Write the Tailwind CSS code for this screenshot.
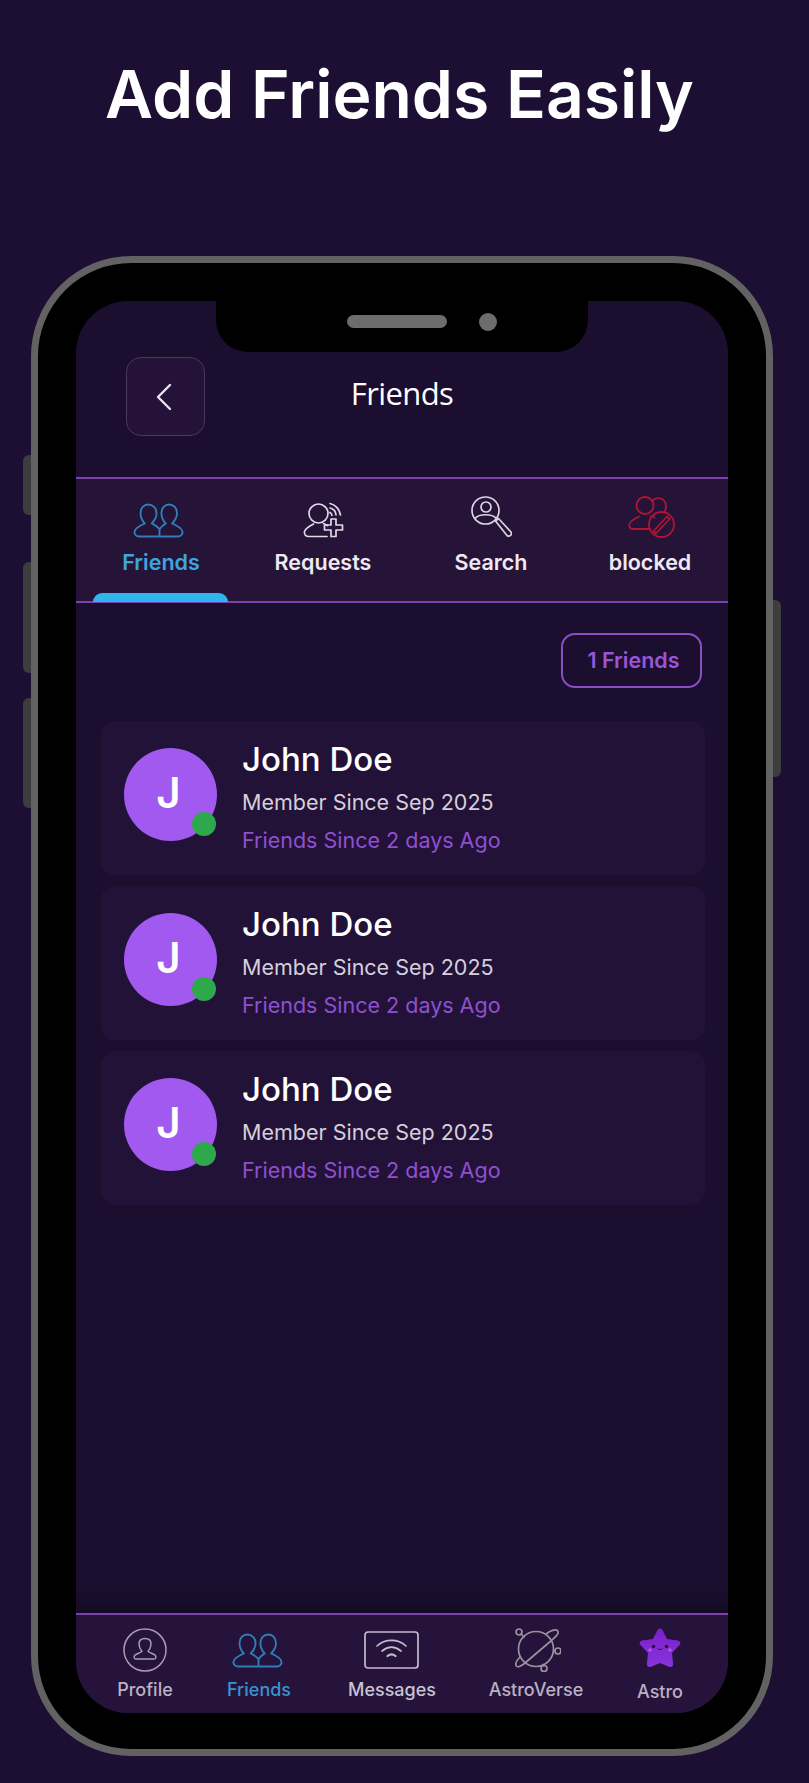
<!DOCTYPE html>
<html lang="en">
<head>
    <meta charset="UTF-8">
    <meta name="viewport" content="width=device-width, initial-scale=1.0">
    <title>Add Friends Easily</title>
    <script src="https://cdn.jsdelivr.net/npm/@tailwindcss/browser@4"></script>
</head>
<body class="bg-[#1d0e33] font-['Inter',sans-serif]">
    <div class="relative w-[809px] h-[1783px] overflow-hidden">
        <!-- Headline -->
        <h1 class="h-[256px] pt-[56px] pr-[10px] text-center text-[66px] leading-[76px] font-semibold text-white">Add Friends Easily</h1>

        <!-- Phone side buttons -->
        <div class="absolute left-[23px] top-[455px] w-[10px] h-[60px] rounded-l-md bg-[#3d3d3d]"></div>
        <div class="absolute left-[23px] top-[562px] w-[10px] h-[111px] rounded-l-md bg-[#3d3d3d]"></div>
        <div class="absolute left-[23px] top-[698px] w-[10px] h-[110px] rounded-l-md bg-[#3d3d3d]"></div>
        <div class="absolute left-[771px] top-[600px] w-[10px] h-[177px] rounded-r-md bg-[#3d3d3d]"></div>

        <!-- Phone -->
        <div class="relative ml-[31px] w-[742px] h-[1500px] box-border border-[7px] border-[#626262] rounded-[100px] bg-black px-[38px] pt-[38px] pb-[36px]">
            <div class="relative h-full flex flex-col overflow-hidden rounded-[52px] bg-[#1b0e2f]">
                <!-- Notch -->
                <div class="absolute left-[140px] top-0 w-[372px] h-[51px] rounded-b-[32px] bg-black flex items-start pt-[12px]">
                    <div class="ml-[131px] mt-[2px] w-[100px] h-[13px] rounded-full bg-[#6d6d6d]"></div>
                    <div class="ml-[32px] w-[18px] h-[18px] rounded-full bg-[#6d6d6d]"></div>
                </div>

                <!-- Header -->
                <header class="h-[176px] shrink-0 grid grid-cols-[1fr_auto_1fr] items-start pt-[56px]">
                    <button class="ml-[50px] w-[79px] h-[79px] rounded-[15px] border border-[#493a5c] bg-[#241238] flex items-center justify-center">
                        <svg class="mr-[4px]" width="18" height="28" viewBox="0 0 18 28" fill="none" stroke="#ece6f0" stroke-width="2.4" stroke-linecap="round" stroke-linejoin="round"><path d="M15 2 L3 14 L15 26"/></svg>
                    </button>
                    <h2 class="mt-[16px] font-['Open_Sans',sans-serif] text-[31px] leading-[40px] tracking-[-0.6px] text-white">Friends</h2>
                    <div></div>
                </header>

                <!-- Tabs -->
                <nav class="relative h-[126px] shrink-0 box-border border-y-2 border-[#7a42b0] bg-[#251338] grid grid-cols-[170px_154px_182px_136px] pt-[17px] text-[21.5px] leading-[24px] font-semibold text-[#efe9f2]">
                    <div class="relative flex flex-col items-center text-[#3ea6dc]">
                        <div class="h-[42px] flex items-end mr-[5px]">
                            <svg width="51" height="35" viewBox="0 0 52 36" fill="none" stroke="#2f7fb8" stroke-width="1.9" stroke-linejoin="round"><path d="M27 34.5 H6 C2 34.5 .8 31 1.5 29 C2.5 25 8 23 12 21 C9 18 7.5 14 7.5 10.5 C7.5 5 11 1.5 15.5 1.5 C20 1.5 24 5 24 10.5 C24 14 22 18 19 21 C22 22.5 25 24 27 27 V34.5"/><path d="M27 34.5 H46 C50 34.5 51.2 31 50.5 29 C49.5 25 44 23 40 21 C43 18 45 14 45 10.5 C45 5 41.5 1.5 37 1.5 C32.5 1.5 29 5 29 10.5 C29 14 30.5 18 33.5 21 C31 22.5 29 24 27 27"/></svg>
                        </div>
                        <span class="mt-[12px]">Friends</span>
                    </div>
                    <div class="flex flex-col items-center">
                        <div class="h-[42px] flex items-end">
                            <svg width="41" height="36" viewBox="0 0 41 36" fill="none" stroke="#e2d9e6" stroke-width="1.7" stroke-linecap="round" stroke-linejoin="round"><circle cx="15.5" cy="11.5" r="9.5"/><path d="M24 34.5 H6 C2.5 34.5 .8 32 1.5 29.5 C3 25.5 7 24 10.5 22 M20.5 21.5 C22 22 23.5 22.8 24.5 23.5"/><path d="M27 1.5 C32 2.5 36.5 7 37.5 13 M27 6 C30 6.5 32.5 9.5 33 13 M27 10.5 C28 11 28.8 12 29 13.5"/><path d="M28 17 H33 V23 H39.5 V28 H33 V34.5 H28 V28 H21.5 V23 H28 Z"/></svg>
                        </div>
                        <span class="mt-[12px]">Requests</span>
                    </div>
                    <div class="flex flex-col items-center">
                        <div class="h-[42px] flex items-end">
                            <svg width="41" height="42" viewBox="0 0 41 42" fill="none" stroke="#dcd3e0" stroke-width="1.7" stroke-linecap="round" stroke-linejoin="round"><circle cx="14.5" cy="14.5" r="13.5"/><circle cx="15" cy="11" r="5"/><path d="M4 22.5 C8 17.5 21 17.5 25.5 22.5"/><path d="M24.5 25 L27.5 22.5 L40 36 C41.5 38.5 38.5 41.5 36 39.5 Z"/></svg>
                        </div>
                        <span class="mt-[12px]">Search</span>
                    </div>
                    <div class="flex flex-col items-center">
                        <div class="h-[42px] flex items-end ml-[3px]">
                            <svg width="47" height="42" viewBox="0 0 47 42" fill="none" stroke="#b01535" stroke-width="1.8" stroke-linecap="round" stroke-linejoin="round"><circle cx="17" cy="9.5" r="8.5"/><path d="M25 4.5 C27 1.5 33 1 36 4.5 C39 8 38.5 13 36 16.5"/><path d="M22 33 H5 C1.5 33 .8 30 1.5 28 C3 24 8 22 11 20.5 M23 20 C24.5 20.5 25.5 21 26.5 21.5"/><circle cx="33.5" cy="28.5" r="12.5"/><path d="M25.5 35 L39 20.5 L41.5 23 L28 37.5 Z"/></svg>
                        </div>
                        <span class="mt-[12px]">blocked</span>
                    </div>
                    <div class="absolute left-[17px] bottom-[-1px] w-[135px] h-[9px] rounded-t-[10px] bg-[#2fb6ee]"></div>
                </nav>

                <!-- Friend list -->
                <section class="shrink-0 pl-[25px] pr-[23px]">
                    <div class="flex justify-end pt-[30px] pr-[3px]">
                        <span class="w-[141px] h-[55px] box-border rounded-[14px] border-2 border-[#8a4fc4] pl-[4px] flex items-center justify-center text-[21.5px] font-semibold text-[#9a55d8]">1 Friends</span>
                    </div>
                    <div class="mt-[33px] flex flex-col gap-[11px]">
                        <article class="h-[154px] rounded-[14px] bg-[#221238] flex items-start pl-[23px]">
                            <div class="relative mt-[27px] w-[93px] h-[93px] shrink-0 rounded-full bg-[#a259f0] flex items-center justify-center pr-[4px] pb-[4px] text-[42px] font-semibold text-white">J
                                <span class="absolute left-[68px] top-[64px] w-[24px] h-[24px] rounded-full bg-[#2ea84a]"></span>
                            </div>
                            <div class="ml-[25px] pt-[18px] flex flex-col">
                                <span class="text-[33px] leading-[40px] font-medium text-white">John Doe</span>
                                <span class="mt-[8px] text-[21.5px] leading-[30px] text-[#d5cfdc]">Member Since Sep 2025</span>
                                <span class="mt-[8px] text-[21.5px] leading-[30px] text-[#8f50d0]">Friends Since 2 days Ago</span>
                            </div>
                        </article>
                        <article class="h-[154px] rounded-[14px] bg-[#221238] flex items-start pl-[23px]">
                            <div class="relative mt-[27px] w-[93px] h-[93px] shrink-0 rounded-full bg-[#a259f0] flex items-center justify-center pr-[4px] pb-[4px] text-[42px] font-semibold text-white">J
                                <span class="absolute left-[68px] top-[64px] w-[24px] h-[24px] rounded-full bg-[#2ea84a]"></span>
                            </div>
                            <div class="ml-[25px] pt-[18px] flex flex-col">
                                <span class="text-[33px] leading-[40px] font-medium text-white">John Doe</span>
                                <span class="mt-[8px] text-[21.5px] leading-[30px] text-[#d5cfdc]">Member Since Sep 2025</span>
                                <span class="mt-[8px] text-[21.5px] leading-[30px] text-[#8f50d0]">Friends Since 2 days Ago</span>
                            </div>
                        </article>
                        <article class="h-[154px] rounded-[14px] bg-[#221238] flex items-start pl-[23px]">
                            <div class="relative mt-[27px] w-[93px] h-[93px] shrink-0 rounded-full bg-[#a259f0] flex items-center justify-center pr-[4px] pb-[4px] text-[42px] font-semibold text-white">J
                                <span class="absolute left-[68px] top-[64px] w-[24px] h-[24px] rounded-full bg-[#2ea84a]"></span>
                            </div>
                            <div class="ml-[25px] pt-[18px] flex flex-col">
                                <span class="text-[33px] leading-[40px] font-medium text-white">John Doe</span>
                                <span class="mt-[8px] text-[21.5px] leading-[30px] text-[#d5cfdc]">Member Since Sep 2025</span>
                                <span class="mt-[8px] text-[21.5px] leading-[30px] text-[#8f50d0]">Friends Since 2 days Ago</span>
                            </div>
                        </article>
                    </div>
                </section>

                <div class="flex-1"></div>
                <div class="h-[26px] shrink-0 bg-linear-to-b from-transparent to-[#150b24]"></div>

                <!-- Bottom nav -->
                <nav class="h-[100px] shrink-0 box-border border-t-2 border-[#7a42b0] bg-[#26133b] grid grid-cols-[138px_90px_176px_116px_128px] pt-[13px] text-[18px] leading-[22px] font-medium text-[#b9b2c4]">
                    <div class="flex flex-col items-center">
                        <div class="h-[44px] flex items-center">
                            <svg width="44" height="44" viewBox="0 0 44 44" fill="none" stroke="#a79db3" stroke-width="1.5" stroke-linejoin="round"><circle cx="22" cy="22" r="21"/><path d="M13 31 C11 31 10.5 28.5 12 27 C14 25.5 17 25 19 23.5 C17 21 16 18 16 16 C16 12.5 18.5 10.5 22 10.5 C25.5 10.5 28 12.5 28 16 C28 18 27 21 25 23.5 C27 25 30 25.5 32 27 C33.5 28.5 33 31 31 31 Z"/></svg>
                        </div>
                        <span class="mt-[7px]">Profile</span>
                    </div>
                    <div class="flex flex-col items-center text-[#3a93cc]">
                        <div class="h-[44px] flex items-center mr-[3px]">
                            <svg width="51" height="35" viewBox="0 0 52 36" fill="none" stroke="#2f7fb8" stroke-width="1.9" stroke-linejoin="round"><path d="M27 34.5 H6 C2 34.5 .8 31 1.5 29 C2.5 25 8 23 12 21 C9 18 7.5 14 7.5 10.5 C7.5 5 11 1.5 15.5 1.5 C20 1.5 24 5 24 10.5 C24 14 22 18 19 21 C22 22.5 25 24 27 27 V34.5"/><path d="M27 34.5 H46 C50 34.5 51.2 31 50.5 29 C49.5 25 44 23 40 21 C43 18 45 14 45 10.5 C45 5 41.5 1.5 37 1.5 C32.5 1.5 29 5 29 10.5 C29 14 30.5 18 33.5 21 C31 22.5 29 24 27 27"/></svg>
                        </div>
                        <span class="mt-[7px]">Friends</span>
                    </div>
                    <div class="flex flex-col items-center text-[#c9c2d2]">
                        <div class="h-[44px] flex items-center mr-[2px]">
                            <svg width="55" height="38" viewBox="0 0 55 38" fill="none" stroke="#c4bccd" stroke-width="1.7" stroke-linecap="round"><rect x="1" y="1" width="53" height="36" rx="3"/><path d="M13 15 C21 7.5 34 7.5 42 15 M18 20 C24 15 31 15 37 20"/><path d="M23.5 25 C26 23 29 23 31.5 25" stroke-width="2.2"/></svg>
                        </div>
                        <span class="mt-[7px]">Messages</span>
                    </div>
                    <div class="flex flex-col items-center mr-[4px]">
                        <div class="h-[44px] flex items-center ml-[4px]">
                            <svg width="46" height="44" viewBox="0 0 46 44" fill="none" stroke="#9a929f" stroke-width="1.7" stroke-linecap="round" stroke-linejoin="round"><circle cx="21" cy="21" r="17.5"/><path d="M31 6 C36 2 42 .5 43 3.5 C44 6.5 40 9 37 12 L10 35 C6 38.5 2 40 1 37.5 C0 35 2 32 5 29"/><circle cx="4" cy="4" r="3"/><path d="M6 6 L9 9"/><circle cx="43" cy="23" r="3"/><path d="M40 23 L38.5 22.5"/><circle cx="29" cy="40.5" r="3"/><path d="M28.5 37.5 L28 36.5"/></svg>
                        </div>
                        <span class="mt-[7px]">AstroVerse</span>
                    </div>
                    <div class="flex flex-col items-center">
                        <div class="h-[44px] flex items-start">
                            <svg width="42" height="40" viewBox="0 0 42 40"><defs><linearGradient id="star" x1="0" y1="0" x2="0" y2="1"><stop offset="0" stop-color="#7a1fce"/><stop offset="1" stop-color="#8a33d8"/></linearGradient></defs><path d="M21 .5 C22.5 .5 23.5 2 24.5 4 L28 11 L38.5 12.5 C41.5 13 42.5 15.5 40 17.5 L33 25 L34 35 C34.5 38.5 32.5 40 29.5 38.5 L21 35 L12.5 38.5 C9.5 40 7.5 38.5 8 35 L9 25 L2 17.5 C-.5 15.5 .5 13 3.5 12.5 L14 11 L17.5 4 C18.500 2 19.5 .5 21 .5 Z" fill="url(#star)"/><circle cx="14.5" cy="18.500" r="1.800" fill="#2a1040"/><circle cx="27.5" cy="18.5" r="1.8" fill="#2a1040"/><path d="M18.5 20.5 C19.5 22 22.5 22 23.5 20.5" fill="none" stroke="#2a1040" stroke-width="1"/><circle cx="11" cy="22" r="1.8" fill="#a45be0"/><circle cx="31" cy="22" r="1.8" fill="#a45be0"/></svg>
                        </div>
                        <span class="mt-[9px]">Astro</span>
                    </div>
                </nav>
            </div>
        </div>
    </div>
</body>
</html>
